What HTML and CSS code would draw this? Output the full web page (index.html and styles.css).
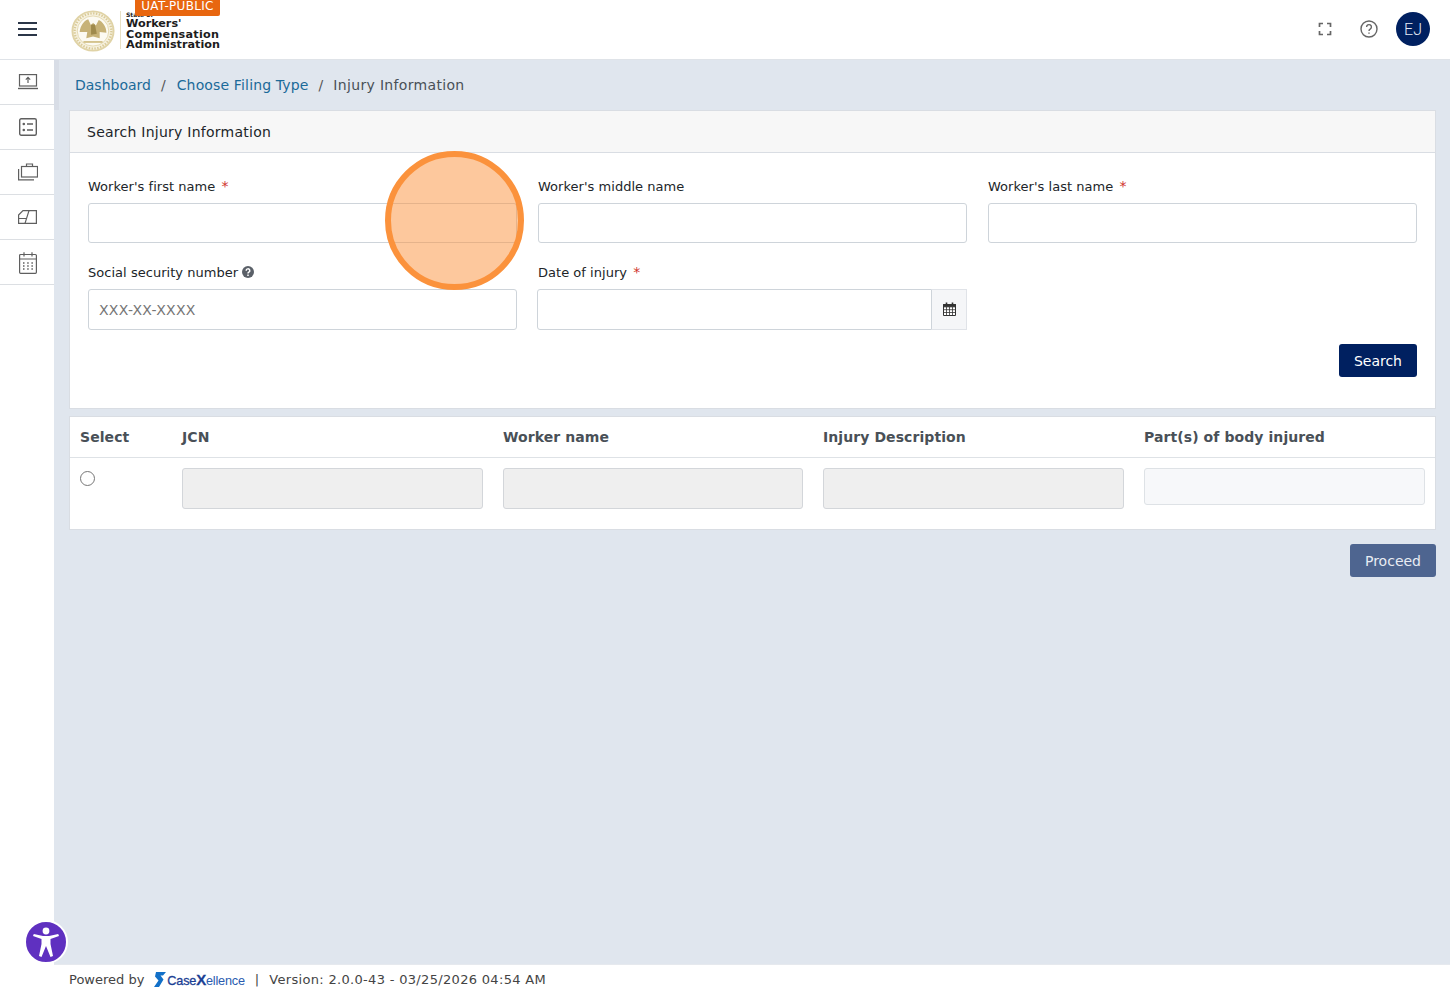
FILE: index.html
```html
<!DOCTYPE html>
<html lang="en">
<head>
    <meta charset="UTF-8">
    <title>Injury Information</title>
    <link rel="stylesheet" href="styles.css">
</head>
<body>
    <div class="app">
        <header class="topbar">
            <div class="menu-btn"><span></span><span></span><span></span></div>
            <div class="logo">
                <svg class="seal" width="44" height="42" viewBox="0 0 46 46" preserveAspectRatio="none">
                    <circle cx="23" cy="23" r="21.500" fill="#f6f1df" stroke="#e0d3a6" stroke-width="2"/>
                    <circle cx="23" cy="23" r="19.200" fill="none" stroke="#d9ca98" stroke-width="2.400" stroke-dasharray="1.500 1.500"/>
                    <circle cx="23" cy="23" r="16.500" fill="#fcfaf2" stroke="#e3d8b0" stroke-width="1"/>
                    <path d="M9 24 C10 17 13 12 18 10 L21 17 L23 14 L26 17 L29 11 C33 13 37 18 37 25 L30 24 L30 31 L23 29 L16 31 L17 24 Z" fill="#c7b277"/>
                    <path d="M21 16 L25 16 L27 26 L21 27 Z" fill="#9f8a4c"/>
                    <path d="M13 35 H33" stroke="#d2c189" stroke-width="2"/>
                </svg>
                <div class="logo-rule"></div>
                <div class="logo-text">
                    <small>State of</small>
                    <b>Workers'</b>
                    <b class="wide">Compensation</b>
                    <b>Administration</b>
                </div>
                <div class="env-badge">UAT-PUBLIC</div>
            </div>
            <div class="top-actions">
                <svg class="expand-icon" width="14" height="14" viewBox="0 0 14 14" fill="none" stroke="#666" stroke-width="1.700">
                    <path d="M1.500 5V1.500H5M9 1.500H12.500V5M12.500 9V12.500H9M5 12.500H1.500V9"/>
                </svg>
                <svg class="help-icon" width="18" height="18" viewBox="0 0 18 18" fill="none" stroke="#666" stroke-width="1.400">
                    <circle cx="9" cy="9" r="8"/>
                    <path d="M6.600 7a2.400 2.400 0 1 1 3.600 2.100C9.400 9.600 9 10 9 11"/>
                    <path d="M9 12.400V13.800"/>
                </svg>
                <div class="avatar">EJ</div>
            </div>
        </header>

        <nav class="sidebar">
            <div class="side-item">
                <svg width="20" height="16" viewBox="0 0 20 16" fill="none" stroke="#5f5f5f" stroke-width="1.200">
                    <rect x="1.500" y="0.600" width="17" height="11.400"/>
                    <path d="M0 14.500H20" stroke-width="1.400"/>
                    <path d="M10 9V3.500M7.800 5.600L10 3.400L12.200 5.600"/>
                </svg>
            </div>
            <div class="side-item">
                <svg width="18" height="18" viewBox="0 0 18 18" fill="none" stroke="#5f5f5f" stroke-width="1.400">
                    <rect x="0.700" y="0.700" width="16.600" height="16.600" rx="1.500"/>
                    <path d="M8 6H14M8 12H14"/>
                    <circle cx="4.800" cy="6" r="1.300" fill="#5f5f5f" stroke="none"/>
                    <circle cx="4.800" cy="12" r="1.300" fill="#5f5f5f" stroke="none"/>
                </svg>
            </div>
            <div class="side-item">
                <svg width="20" height="18" viewBox="0 0 20 18" fill="none" stroke="#5f5f5f" stroke-width="1.200">
                    <rect x="3.500" y="3.500" width="16" height="10.500"/>
                    <path d="M8.500 3.500V1H14.500V3.500"/>
                    <path d="M0.600 6V16.800H16"/>
                </svg>
            </div>
            <div class="side-item">
                <svg width="19" height="14" viewBox="0 0 19 14" fill="none" stroke="#5f5f5f" stroke-width="1.200">
                    <path d="M0.600 5L5 0.600H18.400V13.400H0.600Z"/>
                    <path d="M0.600 8.500H8M11 0.600L7 13.400"/>
                </svg>
            </div>
            <div class="side-item side-tall">
                <svg width="18" height="22" viewBox="0 0 18 22" fill="none" stroke="#5f5f5f" stroke-width="1.200">
                    <rect x="0.600" y="2.500" width="16.800" height="18.800" rx="1"/>
                    <path d="M0.600 7H17.400M5 0.300V4.500M13 0.300V4.500"/>
                    <path d="M4 11H5.500M8.200 11H9.700M12.400 11H13.900M4 14H5.500M8.200 14H9.700M12.400 14H13.900M4 17H5.500M8.200 17H9.700M12.400 17H13.900" stroke-width="1.300"/>
                </svg>
            </div>
        </nav>

        <main class="main">
            <ol class="crumbs">
                <li><a href="#">Dashboard</a></li>
                <li class="sep">/</li>
                <li class="middle"><a href="#">Choose Filing Type</a></li>
                <li class="sep">/</li>
                <li class="current">Injury Information</li>
            </ol>

            <section class="card search-card">
                <div class="card-head">Search Injury Information</div>
                <div class="card-body">
                    <div class="form-grid">
                        <div class="field">
                            <label>Worker's first name <i>*</i></label>
                            <input class="input" type="text">
                        </div>
                        <div class="field">
                            <label>Worker's middle name</label>
                            <input class="input" type="text">
                        </div>
                        <div class="field">
                            <label>Worker's last name <i>*</i></label>
                            <input class="input" type="text">
                        </div>
                        <div class="field">
                            <label>Social security number
                                <svg class="hint" width="12" height="12" viewBox="0 0 12 12">
                                    <circle cx="6" cy="6" r="6" fill="#5a6068"/>
                                    <path d="M4.200 4.700a1.800 1.800 0 1 1 2.700 1.500C6.300 6.600 6 6.800 6 7.400M6 8.400V9.900" fill="none" stroke="#fff" stroke-width="1.500"/>
                                </svg>
                            </label>
                            <input class="input tall" type="text" placeholder="XXX-XX-XXXX">
                        </div>
                        <div class="field">
                            <label>Date of injury <i>*</i></label>
                            <div class="date-group">
                                <input class="input tall" type="text">
                                <div class="date-addon">
                                    <svg width="13" height="14" viewBox="0 0 13 14">
                                        <path d="M0.500 2.500H12.500V13.500H0.500Z" fill="#fff" stroke="#333"/>
                                        <path d="M0.500 2.500H12.500V4.800H0.500Z" fill="#333" stroke="#333"/>
                                        <path d="M3.500 5V13M6.500 5V13M9.500 5V13M1 7.700H12M1 10.500H12" stroke="#333" stroke-width="0.800"/>
                                        <path d="M3.500 0.500V3.500M9.500 0.500V3.500" stroke="#333" stroke-width="1.600"/>
                                    </svg>
                                </div>
                            </div>
                        </div>
                    </div>
                    <div class="search-row">
                        <button class="btn btn-navy">Search</button>
                    </div>
                </div>
            </section>

            <section class="card result-card">
                <div class="result-row result-head">
                    <div>Select</div>
                    <div>JCN</div>
                    <div>Worker name</div>
                    <div>Injury Description</div>
                    <div>Part(s) of body injured</div>
                </div>
                <div class="result-row result-body">
                    <div><span class="radio"></span></div>
                    <div class="readonly"></div>
                    <div class="readonly"></div>
                    <div class="readonly"></div>
                    <div class="readonly light"></div>
                </div>
            </section>

            <div class="proceed-row">
                <button class="btn btn-muted">Proceed</button>
            </div>
        </main>

        <footer class="footer">
            <span>Powered by</span>
            <span class="brand">
                <svg width="12" height="15" viewBox="0 0 12 15">
                    <path d="M2 0H12L9 3.500H6.500L9.500 7.500L5 15H0L4.500 8.500L1 4.500Z" fill="#1270c8"/>
                </svg>
                <span class="brand-name"><b>Case</b><b class="brand-x">X</b>ellence</span>
            </span>
            <span class="pipe">|</span>
            <span class="version">Version: 2.0.0-43 - 03/25/2026 04:54 AM</span>
        </footer>
    </div>

    <div class="click-spot"></div>
    <div class="scroll-thumb"></div>

    <div class="a11y-btn">
        <svg width="30" height="32" viewBox="0 0 30 32" fill="#fff">
            <circle cx="15" cy="5" r="3.400"/>
            <path d="M2 10L2.800 8L12 10H18L27.200 8L28 10L19.500 13V18L22 30L19.500 31L15 20L10.500 31L8 30L10.500 18V13Z"/>
        </svg>
    </div>
</body>
</html>
```

FILE: styles.css
```css
*{box-sizing:border-box;}
body,ol,li{margin:0;padding:0;}
li{list-style:none;}
a{text-decoration:none;}
body{
    width:1450px;
    height:992px;
    overflow:hidden;
    font-family:"DejaVu Sans",sans-serif;
    font-size:13px;
    color:#212529;
    background:#e0e6ee;
}
.app{
    display:grid;
    grid-template-columns:54px 1fr;
    grid-template-rows:60px 1fr 28px;
    height:992px;
}

/* top bar */
.topbar{
    grid-column:1 / 3;
    display:flex;
    align-items:center;
    padding-bottom:1px;
    background:#fff;
    border-bottom:1px solid #dfe3e8;
}
.menu-btn{
    display:flex;
    flex-direction:column;
    gap:4px;
    width:19px;
    margin-left:18px;
}
.menu-btn span{
    height:2px;
    background:#2b3648;
}
.logo{
    position:relative;
    display:flex;
    align-items:center;
    height:58px;
    margin-left:34px;
}
.seal{margin-top:4px;}
.logo-rule{
    width:1px;
    height:38px;
    margin:2px 5px 0 5px;
    background:#e8e0c4;
}
.logo-text{
    display:flex;
    flex-direction:column;
    padding-top:4px;
    color:#1c1c1c;
    line-height:10.700px;
}
.logo-text small{
    font-size:6px;
    line-height:7px;
    font-weight:bold;
    margin-bottom:1px;
}
.logo-text b{
    font-size:11.200px;
}
.logo-text .wide{letter-spacing:.25px;}
.env-badge{
    position:absolute;
    top:0;
    left:64px;
    width:85px;
    height:16px;
    background:#e8660f;
    color:#fff;
    font-size:12px;
    letter-spacing:.3px;
    line-height:13px;
    text-align:center;
    border-radius:0 0 2px 2px;
}
.top-actions{
    display:flex;
    align-items:center;
    margin-left:auto;
    margin-right:20px;
}
.expand-icon{margin-right:28px;}
.help-icon{margin-right:18px;}
.avatar{
    width:34px;
    height:34px;
    border-radius:50%;
    background:#002060;
    color:#e4eaf5;
    font-family:Roboto,sans-serif;
    font-size:16px;
    font-weight:300;
    line-height:36px;
    text-align:center;
}

/* side bar */
.sidebar{
    grid-row:2 / 4;
    background:#fff;
}
.side-item{
    display:flex;
    align-items:center;
    justify-content:center;
    height:45px;
    padding-left:1px;
    border-bottom:1px solid #dcdfe3;
}
.side-tall{padding-top:2px;}

/* main */
.main{
    padding:0 14px 0 15px;
    min-width:0;
}
.crumbs{
    display:flex;
    align-items:center;
    gap:10px;
    height:50px;
    padding-left:6px;
    font-size:14px;
    color:#495057;
}
.crumbs a{color:#1b6a99;}
.crumbs .sep{color:#555;}
.crumbs .middle{
    margin-left:1px;
    letter-spacing:.15px;
}
.crumbs .current{letter-spacing:.33px;}
.card{
    background:#fff;
    border:1px solid #d9dde3;
}
.card-head{
    height:42px;
    padding-left:17px;
    background:#f7f7f7;
    border-bottom:1px solid #d9dde3;
    font-size:14px;
    letter-spacing:.25px;
    line-height:43px;
    color:#212529;
}
.card-body{
    height:255px;
    padding:24px 18px 0 18px;
}
.form-grid{
    display:grid;
    grid-template-columns:repeat(3,1fr);
    column-gap:21px;
    row-gap:20px;
}
.field label{
    display:block;
    height:26px;
    line-height:20px;
    font-size:13px;
    letter-spacing:.03px;
    color:#212529;
}
.field label i{
    font-style:normal;
    font-size:14px;
    line-height:0;
    color:#d0342c;
    margin-left:2px;
}
.hint{
    margin-left:0;
    vertical-align:-1px;
}
.input{
    display:block;
    width:100%;
    height:40px;
    padding:0 10px;
    border:1px solid #ced4da;
    border-radius:3px;
    background:#fff;
    font-family:inherit;
    font-size:14px;
}
.input.tall{height:41px;}
.input::placeholder{
    color:#757575;
    letter-spacing:.27px;
}
.date-group{
    display:flex;
    margin-left:-1px;
}
.date-group .input{
    flex:1;
    border-radius:3px 0 0 3px;
}
.date-addon{
    display:flex;
    align-items:center;
    justify-content:center;
    width:35px;
    height:41px;
    padding-bottom:1px;
    background:#f5f6f8;
    border:1px solid #e0e3e8;
    border-left:0;
}
.search-row{
    display:flex;
    justify-content:flex-end;
    margin-top:14px;
}
.btn{
    height:33px;
    padding:0 15px;
    border:0;
    border-radius:3px;
    font-family:inherit;
    font-size:14px;
    color:#fff;
}
.btn-navy{background:#002060;}
.btn-muted{background:#4e6590;color:#e8ecf3;}

/* result table */
.result-card{
    height:114px;
    margin-top:7px;
}
.result-row{
    display:grid;
    grid-template-columns:82px 301px 300px 301px 281px;
    column-gap:20px;
    padding-left:10px;
}
.result-head{
    height:41px;
    align-items:center;
    border-bottom:1px solid #dee2e6;
    font-size:14px;
    font-weight:bold;
    letter-spacing:.08px;
    color:#495057;
}
.result-body{
    align-items:start;
    padding-top:10px;
}
.radio{
    display:block;
    width:15px;
    height:15px;
    margin-top:3px;
    border:1px solid #767676;
    border-radius:50%;
    background:#fff;
}
.readonly{
    height:41px;
    background:#efefef;
    border:1px solid #d3d6da;
    border-radius:3px;
}
.readonly.light{
    height:37px;
    background:#f7f8fa;
    border-color:#dee2e6;
}
.proceed-row{
    display:flex;
    justify-content:flex-end;
    margin-top:14px;
}

/* footer */
.footer{
    display:flex;
    align-items:center;
    padding:2px 0 0 15px;
    background:#fff;
    border-top:1px solid #e6e9ee;
    font-size:13px;
    color:#444;
}
.brand{
    display:flex;
    align-items:center;
    margin-left:10px;
}
.brand-name{
    margin-left:1px;
    font-family:"Liberation Sans",sans-serif;
    font-size:12.700px;
    letter-spacing:-.2px;
    color:#2a5cb0;
}
.brand-name b{
    font-weight:normal;
    color:#1c3f94;
    -webkit-text-stroke:.3px #1c3f94;
}
.brand-name .brand-x{
    font-size:15px;
    font-weight:bold;
}
.pipe{margin:0 10px 0 10px;}
.version{letter-spacing:.32px;}

/* overlays */
.click-spot{
    position:absolute;
    left:385px;
    top:151px;
    width:139px;
    height:139px;
    border-radius:50%;
    border:6px solid #fb923c;
    background:rgba(251,146,60,.5);
}
.scroll-thumb{
    position:absolute;
    left:54px;
    top:60px;
    width:5px;
    height:50px;
    background:#d8dde6;
}
.a11y-btn{
    position:absolute;
    left:24px;
    top:920px;
    display:flex;
    align-items:center;
    justify-content:center;
    width:44px;
    height:44px;
    border-radius:50%;
    border:2px solid #fff;
    background:#5f30c0;
}
```
